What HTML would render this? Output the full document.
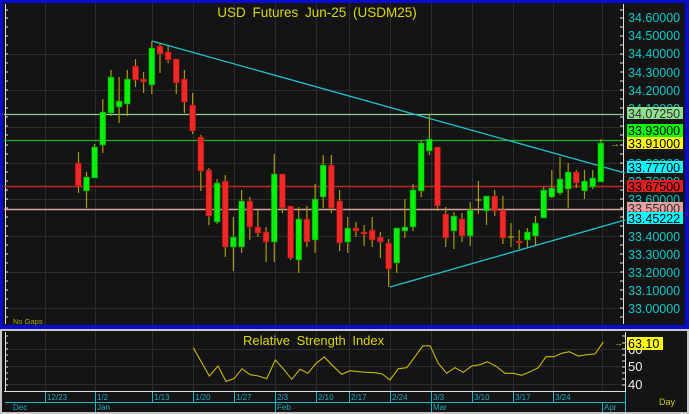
<!DOCTYPE html>
<html><head><meta charset="utf-8"><style>
html,body{margin:0;padding:0;background:#141414;}
body{width:689px;height:414px;overflow:hidden;}
svg{display:block;font-family:"Liberation Sans",sans-serif;}
</style></head><body>
<svg width="689" height="414" viewBox="0 0 689 414" xmlns="http://www.w3.org/2000/svg">
<rect x="0" y="0" width="689" height="414" fill="#c8c8c8"/>
<rect x="0" y="0" width="689" height="329" fill="#0a0ad0"/>
<rect x="3" y="3" width="682" height="322" fill="#141414"/>
<!-- grid main -->
<g stroke="#2c2c2c" stroke-width="1">
<path d="M6 54.5H623M6 90.5H623M6 127.5H623M6 163.5H623M6 199.5H623M6 236.5H623M6 272.5H623M6 308.5H623"/>
<path d="M45.5 3V325M95.5 3V325M152.5 3V325M193.5 3V325M234.5 3V325M275.5 3V325M316.5 3V325M349.5 3V325M390.5 3V325M431.5 3V325M472.5 3V325M513.5 3V325M553.5 3V325M602.5 3V325"/>
</g>
<!-- tick rails -->
<g stroke="#e0e0e0" stroke-width="1">
<path d="M5.5 4V324M623.5 4V324"/>
<path d="M5 10h3M5 18h3M5 27h3M5 36h3M5 45h3M5 54h3M5 63h3M5 72h3M5 81h3M5 90h3M5 99h3M5 108h3M5 117h3M5 126h3M5 135h3M5 145h3M5 154h3M5 163h3M5 172h3M5 181h3M5 190h3M5 199h3M5 208h3M5 217h3M5 226h3M5 236h3M5 245h3M5 254h3M5 263h3M5 272h3M5 281h3M5 290h3M5 299h3M5 308h3M5 317h3"/>
<path d="M620 10h3M620 18h3M620 27h3M620 36h3M620 45h3M620 54h3M620 63h3M620 72h3M620 81h3M620 90h3M620 99h3M620 108h3M620 117h3M620 126h3M620 135h3M620 145h3M620 154h3M620 163h3M620 172h3M620 181h3M620 190h3M620 199h3M620 208h3M620 217h3M620 226h3M620 236h3M620 245h3M620 254h3M620 263h3M620 272h3M620 281h3M620 290h3M620 299h3M620 308h3M620 317h3"/>
</g>
<rect x="624" y="3" width="61" height="322" fill="#141414"/>
<!-- horizontal levels -->
<path d="M4 114.5H623" stroke="#8fd08f" stroke-width="1.2"/>
<path d="M4 140.5H623" stroke="#22b022" stroke-width="1.2"/>
<path d="M4 186.5H623" stroke="#c02424" stroke-width="1.5"/>
<path d="M4 209.5H623" stroke="#d8a0a0" stroke-width="1.5"/>
<!-- trend lines -->
<path d="M152 41L625 173" stroke="#22c0d0" stroke-width="1.3"/>
<path d="M390 287L625 220" stroke="#22c0d0" stroke-width="1.3"/>
<!-- wicks -->
<path stroke="#a89a00" stroke-width="1.2" fill="none" d="M78.5 152V193M86.5 172V208M94.5 144V178M102.8 99V153M111 70V116M119.1 77V123M127.3 70V116M135.5 59V87M143.6 72V93M151.8 41V94M160 43V73M168.1 46V63M176.3 59V94M184.4 70V113M192.6 93V134M200.8 135V191M208.9 168V225M217.1 179V224M225.3 175V257M233.4 217V271M241.6 190V253M249.8 197V240M257.9 210V237M266.1 227V262M274.3 154V262M282.4 174V213M290.6 206V260M298.7 207V273M306.9 206V247M315.1 184V253M323.2 155V208M331.4 155V213M339.6 190V251M347.7 217V253M355.9 222V237M364.1 225V246M372.2 217V247M380.4 232V258M388.6 239V287M396.7 228V273M404.9 199V238M413 184V231M421.2 140V197M429.4 115V155M437.5 147V211M445.7 207V247M453.9 212V249M462 213V242M470.2 202V246M478.4 181V214M486.5 196V225M494.7 190V216M502.9 196V244M511 223V247M519.2 230V249M527.4 228V247M535.5 216V245M543.7 187V218M551.8 170V198M560 157V195M568.2 163V208M576.3 170V188M584.5 170V199M592.7 170V189M600.8 139V182"/>
<path stroke="#a89a00" stroke-width="1.2" d="M475.4 200h6M508 237h6"/>
<!-- green bodies -->
<g fill="#00f000" stroke="#0a7a0a" stroke-width="0.6">
<rect x="83.5" y="177" width="6" height="14"/>
<rect x="91.6" y="147" width="6" height="31"/>
<rect x="99.8" y="112" width="6" height="33"/>
<rect x="108" y="77" width="6" height="36"/>
<rect x="116.1" y="101" width="6" height="6"/>
<rect x="124.3" y="79" width="6" height="25"/>
<rect x="148.8" y="48" width="6" height="37"/>
<rect x="214.1" y="183" width="6" height="39"/>
<rect x="230.4" y="237" width="6" height="10"/>
<rect x="238.6" y="201" width="6" height="46"/>
<rect x="271.3" y="174" width="6" height="68"/>
<rect x="295.7" y="219" width="6" height="41"/>
<rect x="312.1" y="199" width="6" height="41"/>
<rect x="320.2" y="165" width="6" height="32"/>
<rect x="344.7" y="228" width="6" height="14"/>
<rect x="393.7" y="228" width="6" height="35"/>
<rect x="401.9" y="227" width="6" height="4"/>
<rect x="410" y="190" width="6" height="37"/>
<rect x="418.2" y="143" width="6" height="48"/>
<rect x="426.4" y="139" width="6" height="12"/>
<rect x="450.9" y="216" width="6" height="15"/>
<rect x="467.2" y="210" width="6" height="26"/>
<rect x="483.5" y="196" width="6" height="15"/>
<rect x="524.4" y="232" width="6" height="8"/>
<rect x="532.5" y="223" width="6" height="13"/>
<rect x="540.7" y="190" width="6" height="28"/>
<rect x="548.8" y="188" width="6" height="9"/>
<rect x="557" y="179" width="6" height="14"/>
<rect x="565.2" y="172" width="6" height="17"/>
<rect x="581.5" y="181" width="6" height="10"/>
<rect x="589.7" y="178" width="6" height="9"/>
<rect x="597.8" y="143" width="6" height="39"/>
</g>
<!-- red bodies -->
<g fill="#f02828" stroke="#8a1010" stroke-width="0.6">
<rect x="75.3" y="163" width="6" height="23"/>
<rect x="132.5" y="66" width="6" height="14"/>
<rect x="140.6" y="79" width="6" height="3"/>
<rect x="157" y="46" width="6" height="8"/>
<rect x="165.1" y="52" width="6" height="8"/>
<rect x="173.3" y="59" width="6" height="24"/>
<rect x="181.4" y="79" width="6" height="23"/>
<rect x="189.6" y="105" width="6" height="26"/>
<rect x="197.8" y="137" width="6" height="34"/>
<rect x="205.9" y="170" width="6" height="46"/>
<rect x="222.3" y="181" width="6" height="66"/>
<rect x="246.8" y="201" width="6" height="26"/>
<rect x="254.9" y="227" width="6" height="6"/>
<rect x="263.1" y="232" width="6" height="10"/>
<rect x="279.4" y="174" width="6" height="34"/>
<rect x="287.6" y="206" width="6" height="52"/>
<rect x="303.9" y="219" width="6" height="23"/>
<rect x="328.4" y="165" width="6" height="43"/>
<rect x="336.6" y="201" width="6" height="42"/>
<rect x="352.9" y="228" width="6" height="3"/>
<rect x="361.1" y="232" width="6" height="2"/>
<rect x="369.2" y="230" width="6" height="10"/>
<rect x="377.4" y="237" width="6" height="5"/>
<rect x="385.6" y="243" width="6" height="26"/>
<rect x="434.5" y="147" width="6" height="59"/>
<rect x="442.7" y="214" width="6" height="24"/>
<rect x="459" y="219" width="6" height="17"/>
<rect x="491.7" y="196" width="6" height="15"/>
<rect x="499.9" y="210" width="6" height="28"/>
<rect x="516.2" y="241" width="6" height="2"/>
<rect x="573.3" y="172" width="6" height="11"/>
</g>
<text x="610" y="147" fill="#d0d000" font-size="10">→</text>
<!-- title -->
<text x="317" y="17" fill="#d8d800" font-size="13.5" text-anchor="middle" word-spacing="3">USD Futures Jun-25 (USDM25)</text>
<text x="13" y="324" fill="#a8a800" font-size="7.5">No Gaps</text>
<!-- price axis labels -->
<g fill="#00c8c8" font-size="12.5">
<text x="628" y="22">34.60000</text>
<text x="628" y="40">34.50000</text>
<text x="628" y="58">34.40000</text>
<text x="628" y="77">34.30000</text>
<text x="628" y="95">34.20000</text>
<text x="628" y="113">34.10000</text>
<text x="628" y="168">33.80000</text>
<text x="628" y="186">33.70000</text>
<text x="628" y="204">33.60000</text>
<text x="628" y="222">33.50000</text>
<text x="628" y="241">33.40000</text>
<text x="628" y="259">33.30000</text>
<text x="628" y="277">33.20000</text>
<text x="628" y="295">33.10000</text>
<text x="628" y="313">33.00000</text>
</g>
<rect x="627" y="107" width="56" height="12" fill="#90e090"/>
<text x="628" y="118" fill="#303030" font-size="12.5">34.07250</text>
<rect x="627" y="124" width="56" height="13" fill="#00ff00"/>
<text x="628" y="135" fill="#000" font-size="12.5">33.93000</text>
<rect x="627" y="137" width="56" height="12" fill="#ffff00"/>
<text x="628" y="148" fill="#000" font-size="12.5">33.91000</text>
<rect x="627" y="161" width="56" height="12" fill="#00ffff"/>
<text x="628" y="172" fill="#000" font-size="12.5">33.77700</text>
<rect x="627" y="180" width="56" height="12" fill="#e02020"/>
<text x="628" y="191" fill="#000" font-size="12.5">33.67500</text>
<rect x="627" y="202" width="56" height="12" fill="#e8a0a0"/>
<text x="628" y="213" fill="#303030" font-size="12.5">33.55000</text>
<rect x="627" y="212" width="56" height="12" fill="#00ffff"/>
<text x="628" y="223" fill="#000" font-size="12.5">33.45222</text>
<!-- lower panel -->
<rect x="2" y="331" width="685" height="81" fill="#141414"/>
<g stroke="#2c2c2c" stroke-width="1">
<path d="M6 349.5H623M6 366.5H623M6 384.5H623"/>
<path d="M45.5 331V392M95.5 331V392M152.5 331V392M193.5 331V392M234.5 331V392M275.5 331V392M316.5 331V392M349.5 331V392M390.5 331V392M431.5 331V392M472.5 331V392M513.5 331V392M553.5 331V392M602.5 331V392"/>
</g>
<g stroke="#e0e0e0" stroke-width="1">
<path d="M5.5 332V391M625.5 332V391M4 391.5H626"/>
<path d="M5 336h3M5 343h3M5 349h3M5 355h3M5 361h3M5 367h3M5 373h3M5 379h3M5 385h3M622 336h3M622 343h3M622 349h3M622 355h3M622 361h3M622 367h3M622 373h3M622 379h3M622 385h3"/>
</g>
<text x="243" y="345" fill="#d8d800" font-size="13" word-spacing="3">Relative Strength Index</text>
<polyline fill="none" stroke="#c8b800" stroke-width="1.1" points="193.3,347.7 209.3,376 218,366 226,381.3 234,378.7 242,368.7 250,374.7 258.3,376 266.7,378.7 275.3,360 283.7,369.3 291.7,379.3 300,369.3 308,373.3 316,363.3 324.3,357 332.3,365.3 341.7,374.3 350,370.7 358.3,371.7 366.7,372.3 375,372.7 382.3,374 390,380 398.3,368.7 406.7,367.7 415,356.7 422.7,346 430,345.7 438.3,363.3 446.7,373.3 455,367.7 463.3,372.3 471.7,366 480,364.7 487.3,361.7 496.7,366.7 505,373.3 513.3,373.3 521.7,375.3 530,371.7 538.3,367.7 546,356.7 554,356.7 561.7,353.3 569.3,351.7 578.3,356 586.7,354.7 595,354 603.3,342"/>
<text x="614" y="346" fill="#d0d000" font-size="9">→</text>
<g fill="#e8e8e8" font-size="13">
<text x="628" y="354">60</text>
<text x="628" y="371">50</text>
<text x="628" y="389">40</text>
</g>
<rect x="627" y="337" width="36" height="13" fill="#ffff00"/>
<text x="628" y="348" fill="#000" font-size="12.5">63.10</text>
<text x="659" y="405" fill="#c8c800" font-size="9">Day</text>
<!-- date rows -->
<g stroke="#20b8c8" stroke-width="1">
<path d="M5 402.5H625M625.5 392V412"/>
<path d="M45.5 392V402M95.5 392V412M152.5 392V402M193.5 392V402M234.5 392V402M275.5 392V412M316.5 392V402M349.5 392V402M390.5 392V402M431.5 392V412M472.5 392V402M513.5 392V402M553.5 392V402M602.5 402V412"/>
</g>
<g fill="#20a8c0" font-size="8">
<text x="47" y="400">12/23</text>
<text x="97" y="400">1/2</text>
<text x="154" y="400">1/13</text>
<text x="195" y="400">1/20</text>
<text x="236" y="400">1/27</text>
<text x="277" y="400">2/3</text>
<text x="318" y="400">2/10</text>
<text x="351" y="400">2/17</text>
<text x="392" y="400">2/24</text>
<text x="433" y="400">3/3</text>
<text x="474" y="400">3/10</text>
<text x="515" y="400">3/17</text>
<text x="555" y="400">3/24</text>
<text x="13" y="410">Dec</text>
<text x="97" y="410">Jan</text>
<text x="277" y="410">Feb</text>
<text x="433" y="410">Mar</text>
<text x="604" y="410">Apr</text>
</g>
</svg>
</body></html>
